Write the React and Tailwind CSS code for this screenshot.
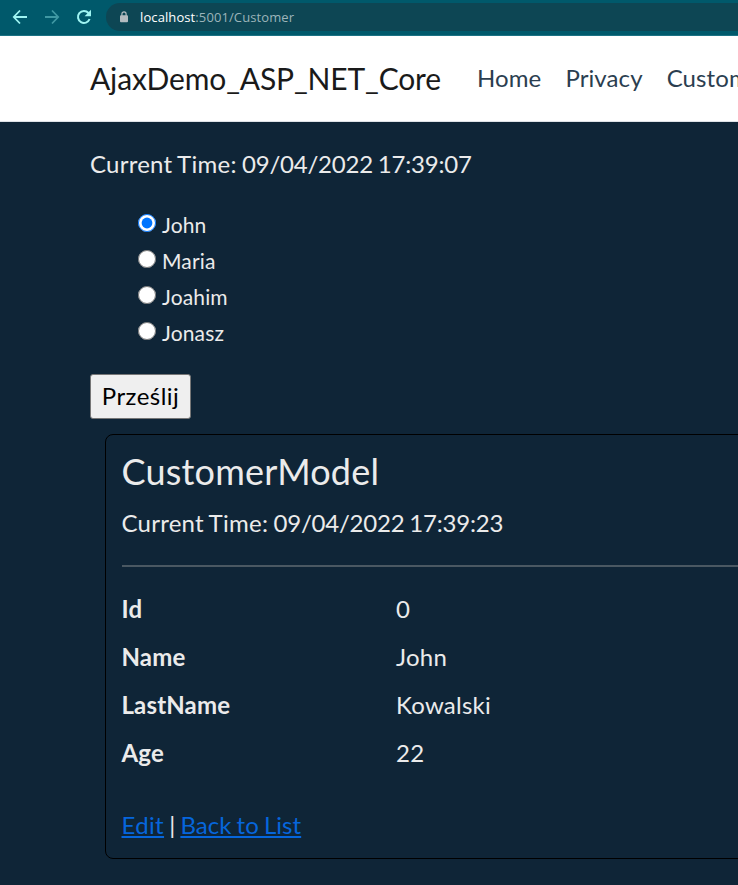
import React from "react";

const names = ["John", "Maria", "Joahim", "Jonasz"];

const details = [
  ["Id", "0"],
  ["Name", "John"],
  ["LastName", "Kowalski"],
  ["Age", "22"],
];

function BrowserBar() {
  return (
    <div className="flex h-9 items-center border-b border-[#1b7284] bg-[#00596b] pb-px pl-3">
      <svg className="h-4 w-4 shrink-0" viewBox="0 0 16 16" fill="none" stroke="#9ff4f2" strokeWidth="1.8">
        <path d="M15 8H2M8 1.5 1.8 8 8 14.5" />
      </svg>
      <svg className="ml-4 h-4 w-4 shrink-0" viewBox="0 0 16 16" fill="none" stroke="#3f98a3" strokeWidth="1.8">
        <path d="M1 8h13M8 1.5 14.2 8 8 14.5" />
      </svg>
      <svg className="ml-4 h-4 w-4 shrink-0" viewBox="0 0 16 16" fill="none" stroke="#9ff4f2" strokeWidth="2">
        <path d="M13.6 10A6 6 0 1 1 12.5 4L14 5.5" />
        <path d="M15 .8v6.4H8.6z" fill="#9ff4f2" stroke="none" />
      </svg>
      <div className="ml-3.5 flex h-7 flex-1 items-center rounded-l-full bg-[#0d4654] pl-3.5">
        <svg className="h-3 w-2 shrink-0" viewBox="0 0 8 12" fill="none">
          <path d="M1.9 5V3a2.1 2.1 0 0 1 4.2 0v2" stroke="#b4bbc0" strokeWidth="1.2" />
          <rect y="4.3" width="8" height="7" rx="1" fill="#b4bbc0" />
        </svg>
        <span className="ml-3 whitespace-nowrap font-['Open_Sans',sans-serif] text-[13px] leading-none tracking-[0.1px] text-[#9cb4ba]">
          <span className="text-white">localhost</span>:5001/Customer
        </span>
      </div>
    </div>
  );
}

function CurrentTime({ time }) {
  return (
    <p className="tracking-[0.25px] [word-spacing:-1px]">
      Current Time: <span className="tracking-[-0.22px]">09/04/2022 {time}</span>
    </p>
  );
}

export default function App() {
  return (
    <div className="h-[885px] w-[738px] overflow-hidden bg-[#0f2537] font-[Lato,sans-serif] text-2xl leading-9 text-[#ebebeb]">
      <BrowserBar />
      <header className="flex h-[86px] items-center whitespace-nowrap border-b border-[#dee2e6] bg-white pb-0.5 pl-[90px] text-[#2b3e50]">
        <span className="w-[387px] shrink-0 text-[30px] tracking-[-0.15px] text-[#1a1a1a]">AjaxDemo_ASP_NET_Core</span>
        <nav className="flex gap-6 tracking-[0.1px]">
          <a>Home</a>
          <a>Privacy</a>
          <a>Customer</a>
        </nav>
      </header>
      <main className="pl-[90px] pt-6">
        <CurrentTime time="17:39:07" />
        <div className="mt-[25px] pl-12 text-[21px] tracking-[0.15px]">
          {names.map((name, i) => (
            <label key={name} className="flex h-9 items-center">
              <input
                type="radio"
                name="customer"
                defaultChecked={i === 0}
                className="mb-1 mr-1.5 h-[18px] w-[18px]"
              />
              {name}
            </label>
          ))}
        </div>
        <button className="mt-[23px] flex h-[45px] w-[101px] items-center justify-center rounded-[3px] border border-[#767676] bg-[#efefef] pb-0.5 tracking-[0.45px] text-black">
          Prześlij
        </button>
        <section className="ml-[15px] mt-[15px] h-[425px] w-[700px] rounded-lg border border-black pl-[15.5px] pt-[15px]">
          <h2 className="h-[55px] text-4xl leading-[43px] tracking-[0.2px]">CustomerModel</h2>
          <CurrentTime time="17:39:23" />
          <hr className="mt-6 border-t-2 border-[#4a5862]" />
          <dl className="mt-6 grid grid-cols-[274.5px_1fr] gap-y-3">
            {details.map(([label, value]) => (
              <React.Fragment key={label}>
                <dt className="font-bold tracking-[0.15px]">{label}</dt>
                <dd className="tracking-[0.25px]">{value}</dd>
              </React.Fragment>
            ))}
          </dl>
          <div className="mt-9 [word-spacing:-1px]">
            <a className="tracking-[0.35px] text-[#0666dc] underline">Edit</a> |{" "}
            <a className="tracking-[0.03px] text-[#0666dc] underline">Back to List</a>
          </div>
        </section>
      </main>
    </div>
  );
}
